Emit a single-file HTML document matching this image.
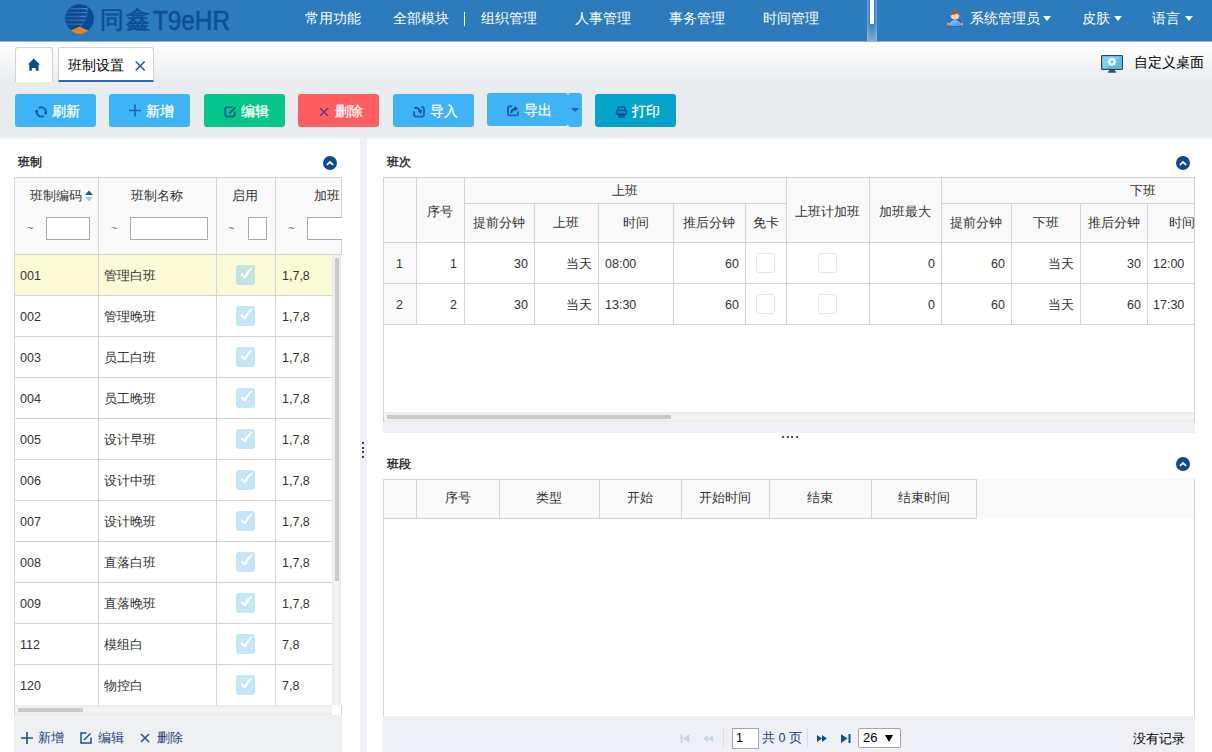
<!DOCTYPE html><html><head><meta charset="utf-8"><style>
*{box-sizing:border-box;margin:0;padding:0}
html,body{width:1212px;height:752px;overflow:hidden;background:#fff;font-family:"Liberation Sans",sans-serif;font-size:12px;color:#333}
.abs{position:absolute}
.t{position:absolute;white-space:nowrap;line-height:14px;font-size:12.5px}
.btn .bt{-webkit-text-stroke:0.25px currentColor}
#hdr{position:absolute;left:0;top:0;width:1212px;height:42px;background:#2c7bbc}
.nav{position:absolute;top:10px;height:16px;line-height:16px;font-size:14px;color:#fff;white-space:nowrap}
.caret{position:absolute;top:16px;width:0;height:0;border-left:4.75px solid transparent;border-right:4.75px solid transparent;border-top:5.2px solid #fff}
#tabbg{position:absolute;left:0;top:42px;width:1212px;height:96px;background:linear-gradient(#fff 0px,#e9ecef 39px,#e9ecef 96px)}
#tabarea{position:absolute;left:0;top:41px;width:1212px;height:97px}
.tab{position:absolute;top:6px;height:35px;background:#fff;border:1px solid #cfd2d6;border-bottom:none;border-radius:3px 3px 0 0}
.btn{position:absolute;top:53px;width:81px;height:33px;border-radius:3px;color:#fff;font-size:14px;line-height:33px;white-space:nowrap}
.btn .bt{position:absolute;top:1px}
.btn svg{position:absolute}
.hl{position:absolute;height:1px;background:#d4d4d4}
.vl{position:absolute;width:1px;background:#d4d4d4}
.hd{position:absolute;background:#f9f9f9}
.cb{position:absolute;width:19px;height:20px;border-radius:3px;background:#c4e5fa}
.cbe{position:absolute;width:19px;height:20px;border-radius:3px;border:1px solid #e6e6e6;background:#fff}
.coll{position:absolute;width:14px;height:14px;border-radius:50%;background:#0b4b94}

.ttl{position:absolute;font-size:12px;font-weight:bold;color:#333;line-height:14px}
</style></head><body>
<div id="hdr">
<svg class="abs" style="left:62px;top:2px" width="36" height="34" viewBox="0 0 36 34">
<defs><clipPath id="lc"><circle cx="17.6" cy="16.6" r="14.4"/></clipPath><clipPath id="lc2"><path d="M0 0 H25.8 Q 25.5 17 18 25.2 L0 34Z"/></clipPath></defs>
<circle cx="17.6" cy="16.6" r="14.4" fill="#0b4a92"/>
<g clip-path="url(#lc)"><g clip-path="url(#lc2)">
<defs><linearGradient id="stg" x1="0" y1="0" x2="1" y2="0"><stop offset="0" stop-color="#1f5ea4"/><stop offset="0.6" stop-color="#2c6cb0"/><stop offset="1" stop-color="#4f8ccb"/></linearGradient></defs><path d="M3 6.8h23M3 10.6h23M3 14.5h23M3 18.3h23M3 22.2h23" stroke="url(#stg)" stroke-width="1.4"/>
</g>
<path d="M25.8 4 Q 25.5 17 18 25.2" fill="none" stroke="#2f6fb0" stroke-width="0.9"/>
</g>
<path d="M8.8 28.2 Q13 27 17.6 24.6 Q22 27 26.2 28.2 Q 22 32.2 17.6 32 Q 13 32.2 8.8 28.2Z" fill="#e8821a"/>
</svg>
<div class="abs" style="left:100px;top:5px;height:30px;line-height:30px;font-size:24px;-webkit-text-stroke:0.6px #0b4f95;color:#0b4f95;white-space:nowrap;letter-spacing:2px">同鑫</div>
<div class="abs" style="left:153px;top:5px;height:32px;line-height:32px;font-size:27px;-webkit-text-stroke:0.5px #0b4f95;color:#0b4f95;white-space:nowrap;transform:scaleX(0.9);transform-origin:0 0">T9eHR</div>
<div class="nav" style="left:305px">常用功能</div>
<div class="nav" style="left:393px">全部模块</div>
<div class="nav" style="left:481px">组织管理</div>
<div class="nav" style="left:575px">人事管理</div>
<div class="nav" style="left:669px">事务管理</div>
<div class="nav" style="left:763px">时间管理</div>
<div class="abs" style="left:464px;top:12px;width:1px;height:14px;background:#fff"></div>
<div class="abs" style="left:867px;top:0;width:10px;height:41px;background:linear-gradient(90deg,rgba(255,255,255,.3),rgba(255,255,255,.08) 30%,rgba(255,255,255,.08) 70%,rgba(255,255,255,.3))"></div>
<div class="abs" style="left:867px;top:24px;width:10px;height:17px;background:linear-gradient(rgba(255,255,255,0),rgba(255,255,255,.3))"></div>
<div class="abs" style="left:870px;top:0;width:4px;height:24px;background:#fff"></div>
<svg class="abs" style="left:943px;top:8px" width="24" height="22" viewBox="0 0 24 22">
<defs><linearGradient id="bd" x1="0" y1="0" x2="1" y2="1"><stop offset="0" stop-color="#8cd0ff"/><stop offset="1" stop-color="#4a90f0"/></linearGradient></defs>
<path d="M4.5 16.5 Q6 11 12 11 Q18 11 19.5 16.5 Q19 18.6 17.5 18.6 L6.5 18.6 Q5 18.6 4.5 16.5Z" fill="#1d4fb8"/>
<path d="M6 16.5 Q7 12 12 12 Q17 12 18 16.5 Q17.5 18 16.5 18 L7.5 18 Q6.5 18 6 16.5Z" fill="url(#bd)"/>
<circle cx="5.4" cy="16" r="1.6" fill="#e89a48"/><circle cx="18.7" cy="16" r="1.6" fill="#e89a48"/>
<circle cx="12" cy="7.4" r="4.4" fill="#f6d2a8"/>
<path d="M7.6 8 Q7.3 3 12 3 Q16.7 3 16.4 8 Q15.5 6 13.5 5.6 Q12.5 7 9.5 6.5 Q8.2 7 7.6 8Z" fill="#a0581c"/>
</svg>
<div class="nav" style="left:970px">系统管理员</div>
<div class="caret" style="left:1043px"></div>
<div class="nav" style="left:1082px">皮肤</div>
<div class="caret" style="left:1114px"></div>
<div class="nav" style="left:1152px">语言</div>
<div class="caret" style="left:1185px"></div>
<div class="abs" style="left:0;top:41px;width:1212px;height:1px;background:#8ab6dc"></div>
</div>
<div id="tabbg"></div>
<div id="tabarea">
<div class="tab" style="left:15px;width:38px"></div>
<svg class="abs" style="left:24px;top:13px" width="22" height="22" viewBox="0 0 22 22"><path d="M9.6 4.6 L16 10.4 L14.6 10.4 L14.6 16.2 Q14.6 16.8 14 16.8 L12.2 16.8 Q11.7 16.8 11.7 16.2 L11.7 14 L7.9 14 L7.9 16.2 Q7.9 16.8 7.3 16.8 L5.9 16.8 Q5.3 16.8 5.3 16.2 L5.3 10.4 L4 10.4Z" fill="#0b4d96"/></svg>
<div class="tab" style="left:58px;width:96px;border-bottom:2px solid #2a6cb0"></div>
<div class="t" style="left:68px;top:16px;font-size:14px;line-height:16px;color:#000">班制设置</div>
<svg class="abs" style="left:130px;top:15px" width="20" height="20" viewBox="0 0 20 20"><path d="M6.2 6.0L14.2 14.0M14.2 6.0L6.2 14.0" stroke="#1b579a" stroke-width="1.5" stroke-linecap="round"/></svg>
<svg class="abs" style="left:1101px;top:14px" width="22" height="19" viewBox="0 0 22 19">
<defs><linearGradient id="scr" x1="0" y1="0" x2="1" y2="1"><stop offset="0" stop-color="#86d6fa"/><stop offset="1" stop-color="#6acbf3"/></linearGradient></defs>
<rect x="0" y="0" width="22" height="15" rx="1.2" fill="#34455a"/>
<rect x="1.2" y="1.2" width="19.6" height="12.4" fill="url(#scr)"/>
<path d="M20.8 1.2 L20.8 13.6 L4 13.6Z" fill="#58bde9"/>
<path d="M8.2 15 H13.8 L14.2 16.6 H7.8Z" fill="#34455a"/>
<rect x="6.7" y="16.2" width="8.6" height="1.6" rx="0.8" fill="#34455a"/>
<circle cx="11" cy="6.9" r="3.1" fill="#fff"/>
<rect x="13.40" y="6.00" width="1.8" height="1.8" fill="#fff" transform="rotate(0 14.30 6.90)"/>
<rect x="12.43" y="8.33" width="1.8" height="1.8" fill="#fff" transform="rotate(45 13.33 9.23)"/>
<rect x="10.10" y="9.30" width="1.8" height="1.8" fill="#fff" transform="rotate(90 11.00 10.20)"/>
<rect x="7.77" y="8.33" width="1.8" height="1.8" fill="#fff" transform="rotate(135 8.67 9.23)"/>
<rect x="6.80" y="6.00" width="1.8" height="1.8" fill="#fff" transform="rotate(180 7.70 6.90)"/>
<rect x="7.77" y="3.67" width="1.8" height="1.8" fill="#fff" transform="rotate(225 8.67 4.57)"/>
<rect x="10.10" y="2.70" width="1.8" height="1.8" fill="#fff" transform="rotate(270 11.00 3.60)"/>
<rect x="12.43" y="3.67" width="1.8" height="1.8" fill="#fff" transform="rotate(315 13.33 4.57)"/>
<circle cx="11" cy="6.9" r="1.7" fill="#5ec3ee"/>
</svg>
<div class="t" style="left:1134px;top:14px;font-size:13.5px;line-height:16px;color:#000">自定义桌面</div>
<div class="btn" style="left:15px;top:53px;width:81px;background:#3eb3f6">
<svg style="left:15px;top:4px" width="26" height="24" viewBox="0 0 26 24"><path d="M8.66 10.23 A4.6 4.6 0 0 1 15.74 15.19" fill="none" stroke="rgba(10,50,130,.62)" stroke-width="1.9"/><path d="M6.77 13.2 A4.6 4.6 0 0 0 13.94 17.77" fill="none" stroke="rgba(10,50,130,.62)" stroke-width="1.9"/><circle cx="15.74" cy="15.19" r="1.4" fill="rgba(10,50,130,.75)"/><circle cx="6.77" cy="13.2" r="1.4" fill="rgba(10,50,130,.75)"/></svg>
<span class="bt" style="left:37px">刷新</span>
</div>
<div class="btn" style="left:109px;top:53px;width:81px;background:#3eb3f6">
<svg style="left:20px;top:10px" width="12" height="13" viewBox="0 0 12 13"><path d="M6 0.5V12.5M0 6.5H12" stroke="rgba(10,50,130,.62)" stroke-width="1.6"/></svg>
<span class="bt" style="left:37px">新增</span>
</div>
<div class="btn" style="left:204px;top:53px;width:81px;background:#06c68b">
<svg style="left:14px;top:4px" width="26" height="24" viewBox="0 0 26 24"><path d="M14.6 9.1 H8.9 Q7.2 9.1 7.2 10.8 V16.8 Q7.2 18.5 8.9 18.5 H15 Q16.7 18.5 16.7 16.8 V13.8" fill="none" stroke="rgba(10,50,130,.62)" stroke-width="1.9"/><path d="M11 15.6 L17.6 9.4" stroke="rgba(10,50,130,.75)" stroke-width="1.5"/></svg>
<span class="bt" style="left:37px">编辑</span>
</div>
<div class="btn" style="left:298px;top:53px;width:81px;background:#ff5d5f">
<svg style="left:21px;top:12.5px" width="10" height="10" viewBox="0 0 10 10"><path d="M1 1L9 9M9 1L1 9" stroke="rgba(10,50,130,.62)" stroke-width="1.7"/></svg>
<span class="bt" style="left:37px">删除</span>
</div>
<div class="btn" style="left:393px;top:53px;width:81px;background:#3eb3f6">
<svg style="left:20px;top:12px" width="13" height="12" viewBox="0 0 13 12"><path d="M1 5.2 V8.6 Q1 10.6 3 10.6 H9 Q11 10.6 11 8.6 V3 Q11 1 9 1 H8.5" fill="none" stroke="rgba(10,50,130,.62)" stroke-width="1.9"/><path d="M1.2 2.2 Q4.5 0.6 6.8 4.6" fill="none" stroke="rgba(10,50,130,.75)" stroke-width="2"/><path d="M4.8 5.4 L9 3.4 L8.4 7.9Z" fill="rgba(10,50,130,.75)"/></svg>
<span class="bt" style="left:37px">导入</span>
</div>
<div class="btn" style="left:487px;top:52px;width:81px;background:#3eb3f6">
<svg style="left:20px;top:12px" width="13" height="12" viewBox="0 0 13 12"><path d="M5 1.2 H3 Q1 1.2 1 3.2 V8.4 Q1 10.4 3 10.4 H9 Q11 10.4 11 8.4 V6.6" fill="none" stroke="rgba(10,50,130,.62)" stroke-width="1.9"/><path d="M4 8 Q5 4.2 8.2 3.8" fill="none" stroke="rgba(10,50,130,.75)" stroke-width="2"/><path d="M7.6 1 L11.2 3.6 L7.6 6.4Z" fill="rgba(10,50,130,.75)"/></svg>
<span class="bt" style="left:37px">导出</span>
</div>
<div class="btn" style="left:568px;top:52px;width:14px;height:34px;background:#3eb3f6"><div class="abs" style="left:3px;top:15px;width:0;height:0;border-left:4px solid transparent;border-right:4px solid transparent;border-top:4px solid rgba(10,50,130,.62)"></div></div>
<div class="btn" style="left:595px;top:53px;width:81px;background:#02a4cc">
<svg style="left:20px;top:12px" width="13" height="13" viewBox="0 0 13 13"><path d="M3.2 3.6 V2.2 Q3.2 1 4.4 1 H8.6 Q9.8 1 9.8 2.2 V3.6" fill="none" stroke="rgba(10,50,130,.62)" stroke-width="1.6"/><path d="M2.5 3.5 H10.5 Q12.3 3.5 12.3 5.5 V7.5 Q12.3 9.2 10.5 9.2 H2.5 Q0.7 9.2 0.7 7.5 V5.5 Q0.7 3.5 2.5 3.5Z" fill="rgba(10,50,130,.62)"/><rect x="2" y="5.2" width="9" height="2" fill="#02a4cc" opacity=".8"/><path d="M3 8 H10 V11 Q10 11.8 9.2 11.8 H3.8 Q3 11.8 3 11 Z" fill="rgba(10,50,130,.62)"/></svg>
<span class="bt" style="left:37px">打印</span>
</div>
</div>
<div class="ttl" style="left:18px;top:155px">班制</div>
<div class="coll" style="left:323px;top:156px"><svg width="14" height="14" viewBox="0 0 14 14" style="position:absolute;left:0;top:0"><path d="M3.9 8.9 L7 6.1 L10.1 8.9" fill="none" stroke="#fff" stroke-width="1.9"/></svg></div>
<div class="hd" style="left:14px;top:177px;width:328px;height:78px"></div>
<div class="abs" style="left:15px;top:255px;width:317px;height:40px;background:#fafad7"></div>
<div class="hl" style="left:14px;top:177px;width:328px"></div>
<div class="hl" style="left:14px;top:254px;width:328px"></div>
<div class="hl" style="left:14px;top:295px;width:318px"></div>
<div class="hl" style="left:14px;top:336px;width:318px"></div>
<div class="hl" style="left:14px;top:377px;width:318px"></div>
<div class="hl" style="left:14px;top:418px;width:318px"></div>
<div class="hl" style="left:14px;top:459px;width:318px"></div>
<div class="hl" style="left:14px;top:500px;width:318px"></div>
<div class="hl" style="left:14px;top:541px;width:318px"></div>
<div class="hl" style="left:14px;top:582px;width:318px"></div>
<div class="hl" style="left:14px;top:623px;width:318px"></div>
<div class="hl" style="left:14px;top:664px;width:318px"></div>
<div class="hl" style="left:14px;top:705px;width:318px"></div>
<div class="vl" style="left:14px;top:177px;height:528px"></div>
<div class="vl" style="left:98px;top:177px;height:528px"></div>
<div class="vl" style="left:216px;top:177px;height:528px"></div>
<div class="vl" style="left:275px;top:177px;height:528px"></div>
<div class="vl" style="left:341px;top:177px;height:78px"></div>
<div class="t" style="left:30px;top:189px">班制编码</div>
<svg class="abs" style="left:85px;top:190px" width="8" height="12" viewBox="0 0 8 12"><path d="M0 5 L4 0.5 L8 5Z" fill="#1c5a9a"/><path d="M0 7 L4 11.5 L8 7Z" fill="#a8c8e8"/></svg>
<div class="t" style="left:131px;top:189px">班制名称</div>
<div class="t" style="left:232px;top:189px">启用</div>
<div class="t" style="left:314px;top:189px;width:27px;overflow:hidden">加班</div>
<div class="t" style="left:27px;top:221px;font-size:11px;color:#2a6cb0">~</div>
<div class="abs" style="left:46px;top:217px;width:44px;height:23px;background:#fff;border:1px solid #a9a9a9"></div>
<div class="t" style="left:111px;top:221px;font-size:11px;color:#2a6cb0">~</div>
<div class="abs" style="left:130px;top:217px;width:78px;height:23px;background:#fff;border:1px solid #a9a9a9"></div>
<div class="t" style="left:228px;top:221px;font-size:11px;color:#2a6cb0">~</div>
<div class="abs" style="left:248px;top:217px;width:19px;height:23px;background:#fff;border:1px solid #a9a9a9"></div>
<div class="t" style="left:288px;top:221px;font-size:11px;color:#2a6cb0">~</div>
<div class="abs" style="left:307px;top:217px;width:40px;height:23px;background:#fff;border:1px solid #a9a9a9"></div>
<div class="abs" style="left:342px;top:177px;width:18px;height:78px;background:#fff"></div>
<div class="t" style="left:20px;top:269px;color:#333">001</div>
<div class="t" style="left:104px;top:269px;color:#333">管理白班</div>
<div class="cb" style="left:236px;top:265px;background:#c1e3e2"><svg class="abs" style="left:0;top:0" width="19" height="20" viewBox="0 0 19 20"><path d="M4.4 9.8 L6.4 8.3 L8.5 10.6 Q11 5.2 15.9 2.2 L16.4 3.2 Q12.8 6.8 9.9 12.9 L8 12.9 Z" fill="#fff"/></svg></div>
<div class="t" style="left:282px;top:269px;color:#333">1,7,8</div>
<div class="t" style="left:20px;top:310px;color:#333">002</div>
<div class="t" style="left:104px;top:310px;color:#333">管理晚班</div>
<div class="cb" style="left:236px;top:306px;background:#c4e5fa"><svg class="abs" style="left:0;top:0" width="19" height="20" viewBox="0 0 19 20"><path d="M4.4 9.8 L6.4 8.3 L8.5 10.6 Q11 5.2 15.9 2.2 L16.4 3.2 Q12.8 6.8 9.9 12.9 L8 12.9 Z" fill="#fff"/></svg></div>
<div class="t" style="left:282px;top:310px;color:#333">1,7,8</div>
<div class="t" style="left:20px;top:351px;color:#333">003</div>
<div class="t" style="left:104px;top:351px;color:#333">员工白班</div>
<div class="cb" style="left:236px;top:347px;background:#c4e5fa"><svg class="abs" style="left:0;top:0" width="19" height="20" viewBox="0 0 19 20"><path d="M4.4 9.8 L6.4 8.3 L8.5 10.6 Q11 5.2 15.9 2.2 L16.4 3.2 Q12.8 6.8 9.9 12.9 L8 12.9 Z" fill="#fff"/></svg></div>
<div class="t" style="left:282px;top:351px;color:#333">1,7,8</div>
<div class="t" style="left:20px;top:392px;color:#333">004</div>
<div class="t" style="left:104px;top:392px;color:#333">员工晚班</div>
<div class="cb" style="left:236px;top:388px;background:#c4e5fa"><svg class="abs" style="left:0;top:0" width="19" height="20" viewBox="0 0 19 20"><path d="M4.4 9.8 L6.4 8.3 L8.5 10.6 Q11 5.2 15.9 2.2 L16.4 3.2 Q12.8 6.8 9.9 12.9 L8 12.9 Z" fill="#fff"/></svg></div>
<div class="t" style="left:282px;top:392px;color:#333">1,7,8</div>
<div class="t" style="left:20px;top:433px;color:#333">005</div>
<div class="t" style="left:104px;top:433px;color:#333">设计早班</div>
<div class="cb" style="left:236px;top:429px;background:#c4e5fa"><svg class="abs" style="left:0;top:0" width="19" height="20" viewBox="0 0 19 20"><path d="M4.4 9.8 L6.4 8.3 L8.5 10.6 Q11 5.2 15.9 2.2 L16.4 3.2 Q12.8 6.8 9.9 12.9 L8 12.9 Z" fill="#fff"/></svg></div>
<div class="t" style="left:282px;top:433px;color:#333">1,7,8</div>
<div class="t" style="left:20px;top:474px;color:#333">006</div>
<div class="t" style="left:104px;top:474px;color:#333">设计中班</div>
<div class="cb" style="left:236px;top:470px;background:#c4e5fa"><svg class="abs" style="left:0;top:0" width="19" height="20" viewBox="0 0 19 20"><path d="M4.4 9.8 L6.4 8.3 L8.5 10.6 Q11 5.2 15.9 2.2 L16.4 3.2 Q12.8 6.8 9.9 12.9 L8 12.9 Z" fill="#fff"/></svg></div>
<div class="t" style="left:282px;top:474px;color:#333">1,7,8</div>
<div class="t" style="left:20px;top:515px;color:#333">007</div>
<div class="t" style="left:104px;top:515px;color:#333">设计晚班</div>
<div class="cb" style="left:236px;top:511px;background:#c4e5fa"><svg class="abs" style="left:0;top:0" width="19" height="20" viewBox="0 0 19 20"><path d="M4.4 9.8 L6.4 8.3 L8.5 10.6 Q11 5.2 15.9 2.2 L16.4 3.2 Q12.8 6.8 9.9 12.9 L8 12.9 Z" fill="#fff"/></svg></div>
<div class="t" style="left:282px;top:515px;color:#333">1,7,8</div>
<div class="t" style="left:20px;top:556px;color:#333">008</div>
<div class="t" style="left:104px;top:556px;color:#333">直落白班</div>
<div class="cb" style="left:236px;top:552px;background:#c4e5fa"><svg class="abs" style="left:0;top:0" width="19" height="20" viewBox="0 0 19 20"><path d="M4.4 9.8 L6.4 8.3 L8.5 10.6 Q11 5.2 15.9 2.2 L16.4 3.2 Q12.8 6.8 9.9 12.9 L8 12.9 Z" fill="#fff"/></svg></div>
<div class="t" style="left:282px;top:556px;color:#333">1,7,8</div>
<div class="t" style="left:20px;top:597px;color:#333">009</div>
<div class="t" style="left:104px;top:597px;color:#333">直落晚班</div>
<div class="cb" style="left:236px;top:593px;background:#c4e5fa"><svg class="abs" style="left:0;top:0" width="19" height="20" viewBox="0 0 19 20"><path d="M4.4 9.8 L6.4 8.3 L8.5 10.6 Q11 5.2 15.9 2.2 L16.4 3.2 Q12.8 6.8 9.9 12.9 L8 12.9 Z" fill="#fff"/></svg></div>
<div class="t" style="left:282px;top:597px;color:#333">1,7,8</div>
<div class="t" style="left:20px;top:638px;color:#333">112</div>
<div class="t" style="left:104px;top:638px;color:#333">模组白</div>
<div class="cb" style="left:236px;top:634px;background:#c4e5fa"><svg class="abs" style="left:0;top:0" width="19" height="20" viewBox="0 0 19 20"><path d="M4.4 9.8 L6.4 8.3 L8.5 10.6 Q11 5.2 15.9 2.2 L16.4 3.2 Q12.8 6.8 9.9 12.9 L8 12.9 Z" fill="#fff"/></svg></div>
<div class="t" style="left:282px;top:638px;color:#333">7,8</div>
<div class="t" style="left:20px;top:679px;color:#333">120</div>
<div class="t" style="left:104px;top:679px;color:#333">物控白</div>
<div class="cb" style="left:236px;top:675px;background:#c4e5fa"><svg class="abs" style="left:0;top:0" width="19" height="20" viewBox="0 0 19 20"><path d="M4.4 9.8 L6.4 8.3 L8.5 10.6 Q11 5.2 15.9 2.2 L16.4 3.2 Q12.8 6.8 9.9 12.9 L8 12.9 Z" fill="#fff"/></svg></div>
<div class="t" style="left:282px;top:679px;color:#333">7,8</div>
<div class="abs" style="left:332px;top:255px;width:9px;height:450px;background:linear-gradient(90deg,#e9e9e9,#f4f4f4 40%,#f4f4f4 60%,#e9e9e9)"></div>
<div class="abs" style="left:335px;top:258px;width:4px;height:323px;background:#c9c9c9"></div>
<div class="abs" style="left:14px;top:705px;width:318px;height:10px;background:linear-gradient(#e9e9e9,#f4f4f4 40%,#f4f4f4 60%,#e9e9e9)"></div>
<div class="abs" style="left:18px;top:708px;width:65px;height:4px;background:#c9c9c9"></div>
<div class="vl" style="left:341px;top:705px;height:10px"></div>
<div class="vl" style="left:14px;top:705px;height:10px"></div>
<div class="abs" style="left:14px;top:715px;width:328px;height:37px;background:#eef0f4"></div>
<svg class="abs" style="left:21px;top:732px" width="12" height="12" viewBox="0 0 12 12"><path d="M6 0V12M0 6H12" stroke="#1f4f8a" stroke-width="1.6"/></svg>
<div class="t" style="left:38px;top:731px;color:#1e3d78">新增</div>
<svg class="abs" style="left:80px;top:732px" width="12" height="12" viewBox="0 0 12 12"><path d="M6.5 1H1V11H11V5.5" fill="none" stroke="#1f4f8a" stroke-width="1.5"/><path d="M4 8 L10.5 1.5" stroke="#1f4f8a" stroke-width="1.5"/></svg>
<div class="t" style="left:98px;top:731px;color:#1e3d78">编辑</div>
<svg class="abs" style="left:140px;top:733px" width="10" height="10" viewBox="0 0 10 10"><path d="M1 1L9 9M9 1L1 9" stroke="#1f4f8a" stroke-width="1.5"/></svg>
<div class="t" style="left:157px;top:731px;color:#1e3d78">删除</div>
<div class="abs" style="left:360px;top:138px;width:7px;height:614px;background:#eef0f5"></div>
<div class="abs" style="left:362px;top:442px;width:2px;height:2px;background:#444"></div>
<div class="abs" style="left:362px;top:446.5px;width:2px;height:2px;background:#444"></div>
<div class="abs" style="left:362px;top:451px;width:2px;height:2px;background:#444"></div>
<div class="abs" style="left:362px;top:455.5px;width:2px;height:2px;background:#444"></div>
<div class="ttl" style="left:387px;top:155px">班次</div>
<div class="coll" style="left:1176px;top:156px"><svg width="14" height="14" viewBox="0 0 14 14" style="position:absolute;left:0;top:0"><path d="M3.9 8.9 L7 6.1 L10.1 8.9" fill="none" stroke="#fff" stroke-width="1.9"/></svg></div>
<div class="hd" style="left:383px;top:177px;width:812px;height:65px"></div>
<div class="abs" style="left:384px;top:243px;width:32px;height:81px;background:#f9f9f9"></div>
<div class="hl" style="left:383px;top:177px;width:812px"></div>
<div class="hl" style="left:464px;top:203px;width:322px"></div>
<div class="hl" style="left:941px;top:203px;width:254px"></div>
<div class="hl" style="left:383px;top:242px;width:812px"></div>
<div class="hl" style="left:383px;top:283px;width:812px"></div>
<div class="hl" style="left:383px;top:324px;width:812px"></div>
<div class="vl" style="left:383px;top:177px;height:147px"></div>
<div class="vl" style="left:416px;top:177px;height:147px"></div>
<div class="vl" style="left:464px;top:177px;height:147px"></div>
<div class="vl" style="left:786px;top:177px;height:147px"></div>
<div class="vl" style="left:869px;top:177px;height:147px"></div>
<div class="vl" style="left:941px;top:177px;height:147px"></div>
<div class="vl" style="left:534px;top:203px;height:121px"></div>
<div class="vl" style="left:598px;top:203px;height:121px"></div>
<div class="vl" style="left:673px;top:203px;height:121px"></div>
<div class="vl" style="left:745px;top:203px;height:121px"></div>
<div class="vl" style="left:1011px;top:203px;height:121px"></div>
<div class="vl" style="left:1080px;top:203px;height:121px"></div>
<div class="vl" style="left:1147px;top:203px;height:121px"></div>
<div class="vl" style="left:383px;top:324px;height:98px"></div>
<div class="vl" style="left:1194px;top:177px;height:245px"></div>
<div class="t" style="left:416px;top:205px;width:48px;text-align:center">序号</div>
<div class="t" style="left:464px;top:184px;width:322px;text-align:center">上班</div>
<div class="t" style="left:464px;top:216px;width:70px;text-align:center">提前分钟</div>
<div class="t" style="left:534px;top:216px;width:64px;text-align:center">上班</div>
<div class="t" style="left:598px;top:216px;width:75px;text-align:center">时间</div>
<div class="t" style="left:673px;top:216px;width:72px;text-align:center">推后分钟</div>
<div class="t" style="left:745px;top:216px;width:41px;text-align:center">免卡</div>
<div class="t" style="left:786px;top:205px;width:83px;text-align:center">上班计加班</div>
<div class="t" style="left:869px;top:205px;width:72px;text-align:center">加班最大</div>
<div class="t" style="left:1130px;top:184px">下班</div>
<div class="t" style="left:941px;top:216px;width:70px;text-align:center">提前分钟</div>
<div class="t" style="left:1011px;top:216px;width:69px;text-align:center">下班</div>
<div class="t" style="left:1080px;top:216px;width:67px;text-align:center">推后分钟</div>
<div class="t" style="left:1169px;top:216px">时间</div>
<div class="t" style="left:383px;top:257px;width:33px;text-align:center">1</div>
<div class="t" style="left:357px;top:257px;width:100px;text-align:right">1</div>
<div class="t" style="left:428px;top:257px;width:100px;text-align:right">30</div>
<div class="t" style="left:492px;top:257px;width:100px;text-align:right">当天</div>
<div class="t" style="left:605px;top:257px">08:00</div>
<div class="t" style="left:639px;top:257px;width:100px;text-align:right">60</div>
<div class="cbe" style="left:756px;top:253px"></div>
<div class="cbe" style="left:818px;top:253px"></div>
<div class="t" style="left:835px;top:257px;width:100px;text-align:right">0</div>
<div class="t" style="left:905px;top:257px;width:100px;text-align:right">60</div>
<div class="t" style="left:974px;top:257px;width:100px;text-align:right">当天</div>
<div class="t" style="left:1041px;top:257px;width:100px;text-align:right">30</div>
<div class="t" style="left:1153px;top:257px">12:00</div>
<div class="t" style="left:383px;top:298px;width:33px;text-align:center">2</div>
<div class="t" style="left:357px;top:298px;width:100px;text-align:right">2</div>
<div class="t" style="left:428px;top:298px;width:100px;text-align:right">30</div>
<div class="t" style="left:492px;top:298px;width:100px;text-align:right">当天</div>
<div class="t" style="left:605px;top:298px">13:30</div>
<div class="t" style="left:639px;top:298px;width:100px;text-align:right">60</div>
<div class="cbe" style="left:756px;top:294px"></div>
<div class="cbe" style="left:818px;top:294px"></div>
<div class="t" style="left:835px;top:298px;width:100px;text-align:right">0</div>
<div class="t" style="left:905px;top:298px;width:100px;text-align:right">60</div>
<div class="t" style="left:974px;top:298px;width:100px;text-align:right">当天</div>
<div class="t" style="left:1041px;top:298px;width:100px;text-align:right">60</div>
<div class="t" style="left:1153px;top:298px">17:30</div>
<div class="abs" style="left:384px;top:412px;width:810px;height:10px;background:linear-gradient(#e9e9e9,#f4f4f4 40%,#f4f4f4 60%,#e9e9e9)"></div>
<div class="abs" style="left:387px;top:415px;width:284px;height:4px;background:#c9c9c9"></div>
<div class="abs" style="left:383px;top:422px;width:812px;height:11px;background:#eff0f5"></div>
<div class="abs" style="left:782px;top:435.5px;width:2px;height:2px;background:#555"></div>
<div class="abs" style="left:786.5px;top:435.5px;width:2px;height:2px;background:#555"></div>
<div class="abs" style="left:791px;top:435.5px;width:2px;height:2px;background:#555"></div>
<div class="abs" style="left:795.5px;top:435.5px;width:2px;height:2px;background:#555"></div>
<div class="ttl" style="left:387px;top:457px">班段</div>
<div class="coll" style="left:1176px;top:457px"><svg width="14" height="14" viewBox="0 0 14 14" style="position:absolute;left:0;top:0"><path d="M3.9 8.9 L7 6.1 L10.1 8.9" fill="none" stroke="#fff" stroke-width="1.9"/></svg></div>
<div class="hd" style="left:383px;top:479px;width:811px;height:39px"></div>
<div class="hl" style="left:383px;top:479px;width:594px"></div>
<div class="hl" style="left:383px;top:518px;width:594px"></div>
<div class="vl" style="left:416px;top:479px;height:40px"></div>
<div class="vl" style="left:499px;top:479px;height:40px"></div>
<div class="vl" style="left:599px;top:479px;height:40px"></div>
<div class="vl" style="left:681px;top:479px;height:40px"></div>
<div class="vl" style="left:769px;top:479px;height:40px"></div>
<div class="vl" style="left:871px;top:479px;height:40px"></div>
<div class="vl" style="left:976px;top:479px;height:40px"></div>
<div class="vl" style="left:383px;top:479px;height:237px"></div>
<div class="vl" style="left:1194px;top:479px;height:237px"></div>
<div class="t" style="left:416px;top:491px;width:83px;text-align:center">序号</div>
<div class="t" style="left:499px;top:491px;width:100px;text-align:center">类型</div>
<div class="t" style="left:599px;top:491px;width:82px;text-align:center">开始</div>
<div class="t" style="left:681px;top:491px;width:88px;text-align:center">开始时间</div>
<div class="t" style="left:769px;top:491px;width:102px;text-align:center">结束</div>
<div class="t" style="left:871px;top:491px;width:105px;text-align:center">结束时间</div>
<div class="abs" style="left:383px;top:716px;width:812px;height:36px;background:#eff0f5"></div>
<svg class="abs" style="left:680px;top:734px" width="10" height="9" viewBox="0 0 10 9"><rect x="0.5" y="0" width="2" height="9" fill="#c5d3e3"/><path d="M9.5 0 L3 4.5 L9.5 9Z" fill="#c5d3e3"/></svg>
<svg class="abs" style="left:703px;top:735px" width="10" height="7" viewBox="0 0 10 7"><path d="M5 0 L0 3.5 L5 7Z M10 0 L5 3.5 L10 7Z" fill="#c5d3e3"/></svg>
<div class="abs" style="left:723px;top:728px;width:1px;height:20px;background:#dadde3"></div>
<div class="abs" style="left:732px;top:728px;width:27px;height:21px;background:#fff;border:1px solid #a6a6a6"></div>
<div class="t" style="left:736px;top:731px;color:#000">1</div>
<div class="t" style="left:762px;top:731px;color:#173f80">共 0 页</div>
<div class="abs" style="left:807px;top:728px;width:1px;height:20px;background:#dadde3"></div>
<svg class="abs" style="left:817px;top:735px" width="10" height="7" viewBox="0 0 10 7"><path d="M0 0 L5 3.5 L0 7Z M5 0 L10 3.5 L5 7Z" fill="#0e4f95"/></svg>
<svg class="abs" style="left:841px;top:734px" width="10" height="9" viewBox="0 0 10 9"><path d="M0 0 L6.5 4.5 L0 9Z" fill="#0e4f95"/><rect x="7.5" y="0" width="2" height="9" fill="#0e4f95"/></svg>
<div class="abs" style="left:858px;top:728px;width:43px;height:20px;background:#fff;border:1px solid #a6a6a6;border-radius:2px"></div>
<div class="t" style="left:863px;top:731px;color:#000;font-size:13px">26</div>
<svg class="abs" style="left:885px;top:735px" width="8" height="7" viewBox="0 0 8 7"><path d="M0 0H8L4 7Z" fill="#000"/></svg>
<div class="t" style="left:1133px;top:732px;color:#000">没有记录</div>
</body></html>
